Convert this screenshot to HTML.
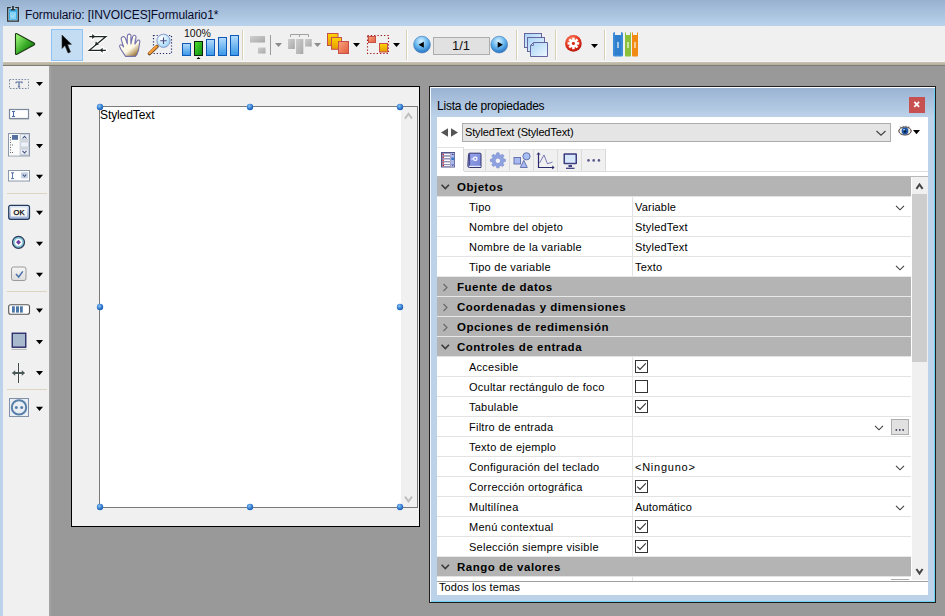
<!DOCTYPE html>
<html><head><meta charset="utf-8">
<style>
*{box-sizing:border-box;margin:0;padding:0}
html,body{width:945px;height:616px;overflow:hidden;background:#999999;font-family:"Liberation Sans",sans-serif;color:#000}
.a{position:absolute}
#title{left:0;top:0;width:945px;height:26px;background:linear-gradient(#97b1d0,#b9d3ec)}
#lframe{left:0;top:26px;width:3px;height:590px;background:#bcd2ea}
#tb{left:3px;top:26px;width:942px;height:36px;background:#f0f0f0}
#band{left:3px;top:61px;width:942px;height:5px;background:linear-gradient(#f7f7f7 0,#f7f7f7 1px,#c7c3af 1px,#b4b09e 4px,#7f7e74 4px,#7f7e74 5px)}
#pal{left:3px;top:66px;width:46px;height:550px;background:#f0f0f0}
#palr{left:49px;top:66px;width:2px;height:550px;background:#a2a2a2}
.sep{position:absolute;width:2px;height:30px;top:30px;background:linear-gradient(90deg,#dcd6c4,#fbfaf6)}
.hsep{position:absolute;left:7px;width:40px;height:1px;background:#ddd7c6}
.arr{position:absolute;width:0;height:0;border-left:4px solid transparent;border-right:4px solid transparent;border-top:4px solid #000}
.t11{font-size:11px;white-space:nowrap;position:absolute;line-height:13px}
#form{left:71px;top:86px;width:349px;height:441px;background:#f0f0f0;border:1px solid #000}
#ta{left:99px;top:106px;width:319px;height:402px;background:#fff;border:1px solid #7a7a7a}
.hd{position:absolute;width:6px;height:6px;border-radius:50%;background:radial-gradient(circle at 40% 35%,#7fb4ec,#2f78cc 60%,#1d5fb0)}
#panel{left:429px;top:86px;width:507px;height:517px;background:#bcd2e9;border:1px solid #1e1e1e}
#ptitle{left:430px;top:87px;width:505px;height:30px;background:linear-gradient(#99b2d2,#bcd2e9)}
#pcont{left:437px;top:117px;width:491px;height:478px;background:#fff}

.hdr{position:absolute;left:437px;width:474px;height:20px;background:#b4b4b4}
.hdr span{position:absolute;left:20px;top:5px;font-size:11.5px;line-height:13px;font-weight:bold;letter-spacing:0.5px;white-space:nowrap;color:#000}
.row{position:absolute;left:437px;width:474px;height:20px;background:#fff}
.tl{position:absolute;left:0;top:0;width:474px;height:1px;background:#e3e3e3}
.hdr .tl{background:#e8e8e8}
.row .k{position:absolute;left:32px;top:5px;font-size:11px;line-height:13px;letter-spacing:0.25px;white-space:nowrap;color:#000}
.row .v{position:absolute;left:198px;top:5px;font-size:11px;line-height:13px;letter-spacing:0.2px;white-space:nowrap;color:#000}
.row .d{position:absolute;left:195px;top:0;width:1px;height:20px;background:#e3e3e3}
.cb{position:absolute;left:198px;top:4px}
.ddc{position:absolute;left:458px;top:9px}
.dots{position:absolute;left:454px;top:3px;width:18px;height:16px;background:#e1e1e1;border:1px solid #adadad;font-size:11px;line-height:10px;text-align:center;color:#000;letter-spacing:-0.5px}
.chev{position:absolute;left:0;top:0;width:20px;height:20px}
</style></head><body>
<div id="title" class="a"></div>
<div class="a t11" style="left:25px;top:9px;font-size:12px;letter-spacing:-0.1px;color:#0a0a2a">Formulario: [INVOICES]Formulario1*</div>
<svg class="a" style="left:0;top:0" width="26" height="26" viewBox="0 0 26 26">
<rect x="8.3" y="8.2" width="9.4" height="12.3" fill="#cfe6f7"/><rect x="9" y="9" width="8.2" height="10.8" fill="#37ade8"/>
<rect x="10" y="11.8" width="6" height="7.2" fill="#86d2f6"/>
<path d="M10.8,7.6 H7.7 V21.1 H18.3 V7.6 H15.2" fill="none" stroke="#2d2d2d" stroke-width="1.3"/>
<rect x="12.1" y="6" width="1.8" height="3.5" fill="#333"/>
<rect x="11" y="9" width="4" height="1.4" fill="#333"/>
<path d="M11,15.5 L12.5,17 L15.5,13.8" fill="none" stroke="#e8f6ff" stroke-width="0.9" stroke-dasharray="0.8,0.6"/>
</svg>
<div id="lframe" class="a"></div>
<div id="tb" class="a"></div>
<div id="band" class="a"></div>

<svg class="a" style="left:0;top:0" width="945" height="66" viewBox="0 0 945 66">
<defs>
<linearGradient id="gPlay" x1="0" y1="0.2" x2="0.9" y2="1"><stop offset="0" stop-color="#9af674"/><stop offset="0.5" stop-color="#3aac28"/><stop offset="1" stop-color="#0e660c"/></linearGradient>
<linearGradient id="gBar" x1="0" y1="0" x2="0" y2="1"><stop offset="0" stop-color="#b5dcfd"/><stop offset="1" stop-color="#3797e6"/></linearGradient>
<linearGradient id="gGreen" x1="0" y1="0" x2="1" y2="1"><stop offset="0" stop-color="#4fe02a"/><stop offset="1" stop-color="#0a8a10"/></linearGradient>
<linearGradient id="gGray" x1="0" y1="0" x2="1" y2="1"><stop offset="0" stop-color="#cfcfcf"/><stop offset="0.7" stop-color="#b4b4b4"/><stop offset="1" stop-color="#a4a4a4"/></linearGradient>
<linearGradient id="gYel" x1="0" y1="0" x2="0" y2="1"><stop offset="0" stop-color="#ffd400"/><stop offset="1" stop-color="#e59a00"/></linearGradient>
<linearGradient id="gSal" x1="0" y1="0" x2="1" y2="1"><stop offset="0" stop-color="#f9a27e"/><stop offset="1" stop-color="#e15c3c"/></linearGradient>
<radialGradient id="gNav" cx="0.45" cy="0.3" r="0.75"><stop offset="0" stop-color="#d9f1ff"/><stop offset="0.5" stop-color="#66b6ee"/><stop offset="1" stop-color="#1d64b8"/></radialGradient>
<linearGradient id="gPage" x1="0" y1="0" x2="1" y2="1"><stop offset="0" stop-color="#a9d3f5"/><stop offset="1" stop-color="#eef8ff"/></linearGradient>
<radialGradient id="gRed" cx="0.4" cy="0.3" r="0.8"><stop offset="0" stop-color="#ff8a6a"/><stop offset="0.55" stop-color="#e2321c"/><stop offset="1" stop-color="#a80e0a"/></radialGradient>
<radialGradient id="gLens" cx="0.35" cy="0.3" r="0.8"><stop offset="0" stop-color="#ffffff"/><stop offset="0.6" stop-color="#bfe6fb"/><stop offset="1" stop-color="#8ccdf0"/></radialGradient>
<linearGradient id="gHand" x1="0.3" y1="0.35" x2="0.75" y2="1"><stop offset="0" stop-color="#fffff2"/><stop offset="0.5" stop-color="#fbf6e2"/><stop offset="1" stop-color="#98702a"/></linearGradient>
</defs>
<!-- play -->
<path d="M15.5,34.5 Q15.5,33 17,33.8 L34,43 Q35.3,44 34,45 L17,54.2 Q15.5,55 15.5,53.5 Z" fill="url(#gPlay)" stroke="#1b3a14" stroke-width="1.1"/>
<!-- selected button -->
<rect x="51.5" y="29.5" width="31" height="31" fill="#c4ddf3" stroke="#8cc4f7"/>
<!-- cursor -->
<path d="M62,35 L62,48.5 L65,45.5 L68,53 L70.5,52 L67.5,44.5 L71.5,44.3 Z" fill="#000" stroke="#333" stroke-width="0.6" stroke-linejoin="round"/>
<!-- Z icon -->
<g stroke="#ffffff" stroke-width="3.4" fill="none" stroke-linejoin="round" stroke-linecap="round"><path d="M89.3,36.5 H105.9 L89.3,50.3 H105.9"/><path d="M92.2,34 V39 M102.6,48 V52.8"/></g>
<g stroke="#1e2626" stroke-width="1.25" fill="none"><path d="M89.3,36.5 H105.9 L89.3,50.3 H105.9"/></g>
<path d="M92.2,33.9 L95.2,36.5 L92.2,39 Z" fill="#1e2626"/>
<path d="M102.6,47.8 L99.8,50.3 L102.6,52.8 Z" fill="#1e2626"/>
<path d="M95,45.6 L95.8,41.6 L98.9,44.4 Z" fill="#1e2626"/>
<!-- hand -->
<path d="M125.6,56.4 L121,49.5 L119.6,46.6 Q119.4,45 120.8,44.8 Q122,44.7 123.6,47 L121.3,39.6 Q120.9,37.2 122.8,36.7 Q124.6,36.4 125.4,38.2 L127,43.2 L127.4,35.6 Q127.8,34 129.3,34.1 Q131,34.3 131,35.8 L131,43 L132.7,36.6 Q133.2,35 134.6,35.3 Q136.2,35.7 136,37.3 L135.2,43.6 L137,41 Q137.7,39.8 138.9,40.1 Q140.1,40.6 139.8,42 L138.4,50.5 L136.8,54.7 L135.3,56.4 Z" fill="url(#gHand)" stroke="#7472aa" stroke-width="1.1" stroke-linejoin="round"/>
<path d="M126.6,39 L127.6,44.5 M131,37.5 L131,44.5 M135.4,38.5 L134.9,44.5" stroke="#7a78b8" stroke-width="0.9" fill="none"/>
<!-- zoom -->
<rect x="153.5" y="35.5" width="18" height="18" fill="none" stroke="#1e2a6a" stroke-width="1.2" stroke-dasharray="1.2,1.9"/>
<path d="M149.5,53.5 L157,46.5" stroke="#6a4a20" stroke-width="3.6" stroke-linecap="round"/>
<path d="M149.5,53 L156.5,46.5" stroke="#f39a3a" stroke-width="2.4" stroke-linecap="round"/>
<circle cx="163.5" cy="40.8" r="6.6" fill="url(#gLens)" stroke="#8a9ad0" stroke-width="1"/>
<path d="M163.5,37.5 V44 M160.3,40.8 H166.7" stroke="#4a4a80" stroke-width="1.1"/>
<!-- 100% -->
<text x="184" y="36.8" font-family="Liberation Sans" font-size="10.5" fill="#111">100%</text>
<rect x="182.5" y="43.5" width="8" height="12" fill="url(#gBar)" stroke="#1058b8"/>
<rect x="194.5" y="41.5" width="8" height="14" fill="url(#gGreen)" stroke="#0e200e"/>
<rect x="206.5" y="39.5" width="8" height="16" fill="url(#gBar)" stroke="#1058b8"/>
<rect x="218.5" y="37.5" width="8" height="18" fill="url(#gBar)" stroke="#1058b8"/>
<rect x="230.5" y="35.5" width="8" height="20" fill="url(#gBar)" stroke="#1058b8"/>
<path d="M196.5,59 L198.5,57 L200.5,59 Z" fill="#000"/>
<!-- separators -->
<g stroke="#d8cfb7" stroke-width="1"><path d="M242.5,30 V60 M406.5,30 V60 M516.5,30 V60 M555.5,30 V60 M604.5,30 V60"/></g>
<g stroke="#ffffff" stroke-width="1"><path d="M243.5,30 V60 M407.5,30 V60 M517.5,30 V60 M556.5,30 V60 M605.5,30 V60"/></g>
<!-- align (disabled) -->
<rect x="250" y="36" width="15" height="6.5" fill="url(#gGray)"/>
<rect x="258" y="47.5" width="7.5" height="6" fill="url(#gGray)"/>
<path d="M270.5,35 V55" stroke="#9c9c9c" stroke-width="1"/>
<path d="M275,43 L282,43 L278.5,47 Z" fill="#8c8c8c"/>
<!-- distribute (disabled) -->
<path d="M290.5,37 V34.5 H308.5 V37 M299.5,34.5 V37" stroke="#a0a0a0" stroke-width="1" fill="none"/>
<rect x="288" y="39" width="6.8" height="10" fill="url(#gGray)"/>
<rect x="296" y="39" width="7.3" height="15" fill="url(#gGray)"/>
<rect x="305" y="39" width="6.7" height="7.5" fill="url(#gGray)"/>
<path d="M314,43 L321,43 L317.5,47 Z" fill="#8c8c8c"/>
<!-- layers -->
<rect x="327.5" y="33.5" width="10.5" height="12" fill="url(#gYel)" stroke="#c8504a"/>
<rect x="331.5" y="37.5" width="10" height="11.8" fill="url(#gYel)" stroke="#c8504a"/>
<rect x="338.5" y="41.5" width="10" height="12" fill="url(#gSal)" stroke="#c8504a"/>
<path d="M353,43 L360,43 L356.5,47 Z" fill="#000"/>
<!-- selection -->
<rect x="367.5" y="35.5" width="21" height="18" fill="none" stroke="#a01818" stroke-width="1.1" stroke-dasharray="1.3,2"/>
<rect x="368.5" y="36.5" width="7" height="6" fill="url(#gSal)" stroke="#c8504a"/>
<rect x="379.5" y="43.5" width="8" height="8.5" fill="url(#gYel)" stroke="#c8504a"/>
<path d="M393,43 L400,43 L396.5,47 Z" fill="#000"/>
<!-- nav -->
<circle cx="422" cy="44.6" r="8.4" fill="url(#gNav)" stroke="#3a78b8" stroke-width="0.6"/>
<path d="M418.6,44.7 L423.8,41.7 L423.8,47.7 Z" fill="#000"/>
<rect x="433.5" y="37.5" width="56" height="17" fill="#e1e1e1" stroke="#adadad"/>
<text x="452" y="50.4" font-family="Liberation Sans" font-size="13" fill="#111">1/1</text>
<circle cx="499.2" cy="44.6" r="8.4" fill="url(#gNav)" stroke="#3a78b8" stroke-width="0.6"/>
<path d="M502.9,44.7 L497.7,41.7 L497.7,47.7 Z" fill="#000"/>
<!-- pages -->
<rect x="524.5" y="33.5" width="17" height="14" fill="url(#gPage)" stroke="#6464a0"/>
<rect x="527.5" y="37.5" width="17" height="14" fill="url(#gPage)" stroke="#6464a0"/>
<path d="M533.5,42.5 H547.5 V56.5 H530.5 V45.5 Z" fill="url(#gPage)" stroke="#6464a0"/>
<path d="M530.5,45.5 H533.5 V42.5" fill="none" stroke="#6464a0" stroke-width="0.8"/>
<!-- gear -->
<circle cx="573.4" cy="43.4" r="8.3" fill="url(#gRed)"/>
<g fill="#fff">
<circle cx="573.4" cy="43.4" r="4"/>
<rect x="572.2" y="37.6" width="2.4" height="11.6"/>
<rect x="567.6" y="42.2" width="11.6" height="2.4"/>
<rect x="572.2" y="37.6" width="2.4" height="11.6" transform="rotate(45 573.4 43.4)"/>
<rect x="572.2" y="37.6" width="2.4" height="11.6" transform="rotate(-45 573.4 43.4)"/>
</g>
<circle cx="573.4" cy="43.4" r="1.6" fill="#d8321c"/>
<path d="M591,44 L598,44 L594.5,48 Z" fill="#000"/>
<!-- books -->
<path d="M613,34 Q613,32 615,32 L615,35 L621,35 L621,32 Q623,32 623,34 L623,55 Q623,56.5 621.5,56.5 L614.5,56.5 Q613,56.5 613,55 Z" fill="#3a8ad8"/>
<rect x="615" y="35" width="6" height="20" fill="#2a76c8" opacity="0.6"/>
<path d="M625,34 Q625,32 626,32 L626,35 L630,35 L630,32 Q631,32 631,34 L631,55 Q631,56.5 630,56.5 L626,56.5 Q625,56.5 625,55 Z" fill="#8cc038"/>
<path d="M632,34 Q632,32 633,32 L633,35 L637,35 L637,32 Q638,32 638,34 L638,55 Q638,56.5 637,56.5 L633,56.5 Q632,56.5 632,55 Z" fill="#f38a12"/>
<g fill="#ffffff" opacity="0.55"><rect x="617" y="42" width="2" height="6"/><rect x="627" y="42" width="2" height="6"/><rect x="634" y="42" width="2" height="6"/></g>
</svg>

<div id="pal" class="a"></div>
<div id="palr" class="a"></div>
<svg class="a" style="left:0;top:66px" width="51" height="550" viewBox="0 66 51 550">
<defs>
<linearGradient id="gBtn" x1="0" y1="0" x2="0" y2="1"><stop offset="0" stop-color="#dde8f6"/><stop offset="1" stop-color="#9fb2d8"/></linearGradient>
<linearGradient id="gChk" x1="0" y1="0" x2="0" y2="1"><stop offset="0" stop-color="#f6f6f6"/><stop offset="1" stop-color="#dcdcdc"/></linearGradient>
</defs>
<g fill="#000">
<path d="M36,82 H43 L39.5,86 Z"/>
<path d="M36,112.5 H43 L39.5,116.8 Z"/>
<path d="M36,144 H43 L39.5,148.2 Z"/>
<path d="M36,174.8 H43 L39.5,179 Z"/>
<path d="M36,210.8 H43 L39.5,215 Z"/>
<path d="M36,241.8 H43 L39.5,246 Z"/>
<path d="M36,272.8 H43 L39.5,277 Z"/>
<path d="M36,308.6 H43 L39.5,312.8 Z"/>
<path d="M36,340 H43 L39.5,344.2 Z"/>
<path d="M36,371 H43 L39.5,375.2 Z"/>
<path d="M36,406.7 H43 L39.5,410.9 Z"/>
</g>
<g stroke="#ddd5c0" stroke-width="1"><path d="M7,193.5 H47 M7,291.5 H47 M7,389.5 H47"/></g>
<!-- T -->
<rect x="9.5" y="79.5" width="19" height="9" fill="none" stroke="#7d8ca4" stroke-width="1" stroke-dasharray="1.6,1.4"/>
<path d="M16,82 H22 V83.2 M16,82 V83.2 M19,82 V87 M17.8,87 H20.2" fill="none" stroke="#5a6e9a" stroke-width="1.2"/>
<!-- text input -->
<rect x="9.5" y="109.5" width="19" height="9" fill="#fff" stroke="#7a8a9c" stroke-width="1.2"/>
<path d="M10,119.5 H29" stroke="#c8c8c8" stroke-width="1"/>
<path d="M12,111.5 H15 M13.5,111.5 V116.5 M12,116.5 H15" stroke="#4a68a8" stroke-width="1"/>
<!-- list -->
<rect x="8.5" y="133.5" width="21" height="22.5" fill="#d8dade" stroke="#8a98aa" stroke-width="1"/>
<rect x="9" y="134" width="10.5" height="21.5" fill="#fbfbfb"/>
<rect x="12" y="135" width="6" height="4.8" fill="#5470a0"/>
<g fill="#404050"><rect x="10" y="137" width="0.9" height="0.9"/><rect x="10" y="139.5" width="0.9" height="0.9"/><rect x="10" y="142" width="0.9" height="0.9"/><rect x="10" y="144.5" width="0.9" height="0.9"/><rect x="10" y="147" width="0.9" height="0.9"/><rect x="10" y="149.5" width="0.9" height="0.9"/><rect x="10" y="152" width="0.9" height="0.9"/><rect x="12" y="144.5" width="0.9" height="0.9"/><rect x="12" y="152" width="0.9" height="0.9"/></g>
<rect x="20.5" y="134.5" width="8" height="5" rx="1" fill="#eef2f8" stroke="#b8c4d4" stroke-width="0.6"/>
<rect x="20.5" y="142" width="8" height="5" rx="1" fill="#eef2f8" stroke="#b8c4d4" stroke-width="0.6"/>
<rect x="20.5" y="149.2" width="8" height="5" rx="1" fill="#eef2f8" stroke="#b8c4d4" stroke-width="0.6"/>
<path d="M22.5,138.5 L24.5,136.3 L26.5,138.5 M22.5,150.8 L24.5,153 L26.5,150.8" fill="none" stroke="#405078" stroke-width="1.1"/>
<!-- combo -->
<rect x="8.5" y="170.5" width="21" height="10.5" fill="#fff" stroke="#8a98aa" stroke-width="1"/>
<path d="M11,172.8 H14 M12.5,172.8 V178.6 M11,178.6 H14" stroke="#4a68a8" stroke-width="0.9"/>
<rect x="21" y="172.3" width="7" height="6.3" rx="1" fill="#c8d2e6"/>
<path d="M22.8,174.5 L24.5,176.5 L26.2,174.5" fill="none" stroke="#405078" stroke-width="1.1"/>
<!-- OK -->
<rect x="8.7" y="205.3" width="20.8" height="14" rx="2" fill="url(#gBtn)" stroke="#243a5c" stroke-width="1.2"/>
<rect x="11" y="207.5" width="16" height="9" fill="#f4f4f4"/>
<text x="13.6" y="215.2" font-family="Liberation Sans" font-size="7.6" fill="#000" stroke="#000" stroke-width="0.25">OK</text>
<!-- radio -->
<circle cx="18.5" cy="242.3" r="6" fill="#86c6dc" stroke="#2c3a58" stroke-width="1.2"/>
<circle cx="18.5" cy="242.3" r="3.6" fill="#ffffff"/>
<path d="M18.5,239.8 L21,242.3 L18.5,244.8 L16,242.3 Z" fill="#7040a0"/>
<!-- checkbox -->
<rect x="11.5" y="267" width="14.5" height="13.5" rx="2" fill="url(#gChk)" stroke="#9a9a9a" stroke-width="1"/>
<path d="M16,274 L18.7,277 L22.8,271.4" fill="none" stroke="#4a72a8" stroke-width="1.5"/>
<!-- progress -->
<rect x="8.7" y="304.7" width="20.8" height="9.5" rx="2" fill="#fff" stroke="#555" stroke-width="1.1"/>
<g fill="#4a78a8"><rect x="12" y="306.3" width="2.8" height="6.3"/><rect x="16" y="306.3" width="3" height="6.3"/><rect x="20" y="306.3" width="2.8" height="6.3"/></g>
<!-- rect -->
<rect x="11" y="332" width="16" height="16.5" fill="#ffffff"/>
<rect x="12.2" y="333.2" width="13.6" height="14" fill="#a9b9cd" stroke="#1e1e60" stroke-width="1.3"/>
<path d="M11.5,349.3 H26.5" stroke="#b0b0b0" stroke-width="1"/>
<!-- splitter -->
<g stroke="#fff" stroke-width="2.8" fill="none"><path d="M18.5,363 V383 M12.5,373 H25.5"/></g>
<g stroke="#404848" stroke-width="1.1" fill="none"><path d="M18.5,363 V383"/></g>
<path d="M11.8,373 L15.2,370.2 L15.2,372 H21.8 V370.2 L25.2,373 L21.8,375.8 L21.8,374 H15.2 V375.8 Z" fill="#4a5858"/>
<!-- plugin -->
<rect x="9.5" y="398.5" width="19" height="18" fill="#e8eef4" stroke="#8090a6" stroke-width="1"/>
<circle cx="19" cy="407.4" r="7.2" fill="none" stroke="#5a80a8" stroke-width="2"/>
<circle cx="16.3" cy="407.4" r="1.5" fill="#5a80a8"/>
<circle cx="21.7" cy="407.4" r="1.5" fill="#5a80a8"/>
</svg>


<!-- form -->
<div id="form" class="a"></div>
<div id="ta" class="a"></div>
<div class="a" style="left:401px;top:107px;width:16px;height:400px;background:#f0f0f0"></div>
<div class="a t11" style="left:100px;top:109px;font-size:12px;letter-spacing:-0.1px">StyledText</div>

<svg class="a" style="left:96px;top:103px" width="320" height="408" viewBox="96 103 320 408">
<defs><radialGradient id="gH" cx="0.4" cy="0.35" r="0.7"><stop offset="0" stop-color="#8cc4f4"/><stop offset="0.6" stop-color="#2f7ad0"/><stop offset="1" stop-color="#1a58a8"/></radialGradient></defs>
<path d="M405,118.6 L408.5,113.8 L412,118.6" fill="none" stroke="#bdbdbd" stroke-width="1.8"/>
<path d="M405,496.6 L408.5,501.4 L412,496.6" fill="none" stroke="#bdbdbd" stroke-width="1.8"/>
<g fill="url(#gH)">
<circle cx="100" cy="107" r="3.2"/><circle cx="250" cy="107" r="3.2"/><circle cx="400" cy="107" r="3.2"/>
<circle cx="100" cy="307" r="3.2"/><circle cx="400" cy="307" r="3.2"/>
<circle cx="100" cy="507" r="3.2"/><circle cx="250" cy="507" r="3.2"/><circle cx="400" cy="507" r="3.2"/>
</g>
</svg>
<!-- panel -->
<div id="panel" class="a"></div>
<div id="ptitle" class="a"></div>
<div class="a" style="left:430px;top:87px;width:505px;height:1px;background:#fff"></div>
<div class="a" style="left:430px;top:87px;width:1px;height:515px;background:#f4f8fc"></div>
<div class="a" style="left:934px;top:88px;width:1px;height:514px;background:#6cd0f4"></div>
<div class="a" style="left:431px;top:601px;width:504px;height:1px;background:#6cd0f4"></div>
<div id="pcont" class="a"></div>
<div class="a t11" style="left:437px;top:100px;font-size:12px;letter-spacing:-0.2px">Lista de propiedades</div>

<!-- panel top -->
<div class="a" style="left:909px;top:97px;width:16px;height:16px;background:#c75050"></div>
<svg class="a" style="left:909px;top:97px" width="16" height="16" viewBox="0 0 16 16"><path d="M5.3,4.9 L10.1,9.9 M10.1,4.9 L5.3,9.9" stroke="#fff" stroke-width="1.7"/></svg>
<svg class="a" style="left:437px;top:117px" width="491" height="60" viewBox="437 117 491 60">
<path d="M448,128.3 L441,132.5 L448,136.7 Z" fill="#555"/>
<path d="M451,128.3 L458,132.5 L451,136.7 Z" fill="#555"/>
<rect x="462.5" y="123.5" width="428" height="18" fill="#e5e5e5" stroke="#acacac"/>
<path d="M876.5,131 L881,135.2 L885.5,131" fill="none" stroke="#404040" stroke-width="1.1"/>
<!-- eye -->
<ellipse cx="905" cy="131" rx="6.2" ry="4" fill="#f4efe6" stroke="#3a3028" stroke-width="1"/>
<circle cx="905" cy="131" r="3.4" fill="#1f58a8"/>
<circle cx="905" cy="131.5" r="1.3" fill="#0a1a3a"/>
<circle cx="904" cy="129.8" r="0.8" fill="#cfe4ff"/>
<path d="M900,126.5 L901,128 M903,125.8 L903.5,127.5 M906,125.8 L906,127.5 M909,126.3 L908.5,128" stroke="#555" stroke-width="0.7"/>
<path d="M913,130 L920,130 L916.5,134.3 Z" fill="#000"/>
<!-- tab strip -->
<path d="M464,171.5 H928" stroke="#dcdcdc" stroke-width="1"/>
<rect x="464" y="149" width="141.5" height="22" fill="#f0f0f0"/>
<path d="M463.5,147 V171 M485.5,149 V171 M509.5,149 V171 M533.5,149 V171 M557.5,149 V171 M581.5,149 V171 M605.5,149 V171" stroke="#dadada" stroke-width="1"/>
<path d="M437,147.5 H463.5 M464,149.5 H605.5" stroke="#e4e4e4" stroke-width="1"/>
<!-- tab1 list icon -->
<rect x="441.5" y="152.5" width="13" height="14.5" fill="#e8e8f4" stroke="#55558a" stroke-width="1"/>
<g fill="#ffffff" stroke="#6a6aa0" stroke-width="0.6"><rect x="442.3" y="153.3" width="8.2" height="2.3"/><rect x="442.3" y="156.2" width="8.2" height="2.3"/><rect x="442.3" y="159.1" width="8.2" height="2.3"/><rect x="442.3" y="162" width="8.2" height="2.3"/><rect x="442.3" y="164.8" width="8.2" height="1.8"/></g>
<rect x="451" y="153" width="3.3" height="13.5" fill="#aab8ea"/>
<rect x="451.3" y="157.5" width="2.8" height="2.5" fill="#3a78c8"/>
<path d="M451.5,155 L452.7,153.6 L453.9,155 Z M451.5,164.6 L452.7,166 L453.9,164.6 Z" fill="#40408a"/>
<g fill="#d01818"><circle cx="443.3" cy="154.4" r="0.75"/><circle cx="443.3" cy="157.3" r="0.75"/><circle cx="443.3" cy="160.2" r="0.75"/><circle cx="443.3" cy="163.1" r="0.75"/><circle cx="443.3" cy="165.6" r="0.75"/></g>
<!-- tab2 book -->
<defs><linearGradient id="gBook" x1="0" y1="0" x2="1" y2="1"><stop offset="0" stop-color="#9aa8ee"/><stop offset="1" stop-color="#7484d4"/></linearGradient></defs>
<path d="M468.5,154.5 Q468.5,153.2 469.8,153.2 L480,153.2 Q481,153.2 481,154.2 L481,167.5 L469.5,167.5 Q467.8,167.5 467.8,165.8 Z" fill="url(#gBook)" stroke="#363670" stroke-width="1"/>
<path d="M469.5,153.5 V166" stroke="#4a4a90" stroke-width="1.2"/>
<path d="M469.2,166.3 H480.6" stroke="#ffffff" stroke-width="1"/>
<circle cx="475.3" cy="158.8" r="1.7" fill="none" stroke="#fff" stroke-width="1.2"/>
<path d="M471.3,159 H473.4" stroke="#fff" stroke-width="1"/>
<!-- tab3 gear -->
<g transform="translate(497.9 160.8)">
<g fill="#8ea2e2" stroke="#6c80c4" stroke-width="0.7">
<path d="M-1.5,-7.6 H1.5 L1.9,-5.3 L3.9,-4.5 L5.8,-5.9 L7.9,-3.8 L6.5,-1.9 L7.3,0.1 L9.6,0.5 V3.5 L7.3,3.9 L6.5,5.9 L7.9,7.8 L5.8,9.9 L3.9,8.5 L1.9,9.3 L1.5,11.6 H-1.5 L-1.9,9.3 L-3.9,8.5 L-5.8,9.9 L-7.9,7.8 L-6.5,5.9 L-7.3,3.9 L-9.6,3.5 V0.5 L-7.3,0.1 L-6.5,-1.9 L-7.9,-3.8 L-5.8,-5.9 L-3.9,-4.5 L-1.9,-5.3 Z" transform="translate(0 -2) scale(0.78)"/>
</g>
<circle r="2.7" fill="#f4f4f8" stroke="#6c80c4" stroke-width="0.6"/>
</g>
<!-- tab4 shapes -->
<rect x="514" y="157.5" width="6.5" height="6.5" fill="#a8b8f0" stroke="#5a6aa8" stroke-width="0.9"/>
<circle cx="526.5" cy="156.3" r="3.6" fill="#a8c0f4" stroke="#5a6aa8" stroke-width="0.9"/>
<path d="M523.8,160.3 L527.3,167.5 L520.3,167.5 Z" fill="#a8b8f0" stroke="#5a6aa8" stroke-width="0.9"/>
<!-- tab5 graph -->
<path d="M538.5,153 V167.5 H554" fill="none" stroke="#2a2a6a" stroke-width="1.2"/>
<path d="M537,154.8 L538.5,152.7 L540,154.8 M552,166 L554.2,167.5 L552,169" fill="none" stroke="#2a2a6a" stroke-width="0.9"/>
<path d="M539.5,163 L544,155 L547.5,163.8 L552.5,162" fill="none" stroke="#6a6ab0" stroke-width="0.9"/>
<!-- tab6 monitor -->
<rect x="563.5" y="153.3" width="13.5" height="11" rx="1" fill="#3c3c80"/>
<rect x="565" y="154.8" width="10.5" height="8" fill="#d6e6fb"/>
<path d="M568.5,165 H572 V167 H568.5 Z" fill="#3c3c80"/>
<path d="M566,168.3 H574.5" stroke="#3c3c80" stroke-width="1.3"/>
<!-- tab7 dots -->
<g fill="#5a5a8a"><circle cx="588.5" cy="160.4" r="1.3"/><circle cx="593.7" cy="160.4" r="1.3"/><circle cx="598.9" cy="160.4" r="1.3"/></g>
</svg>
<div class="a t11" style="left:465px;top:126px;font-size:11px;letter-spacing:-0.15px">StyledText (StyledText)</div>
<!-- grid -->
<div class="hdr" style="top:176px"><i class="tl"></i><svg class="chev" width="20" height="20" viewBox="0 0 20 20"><path d="M4.6,8.8 L8.3,12.5 L12,8.8" fill="none" stroke="#3a3a3a" stroke-width="1.6"/></svg><span>Objetos</span></div>
<div class="row" style="top:196px"><i class="tl"></i><span class="k">Tipo</span><i class="d"></i><span class="v">Variable</span><svg class="ddc" width="10" height="6" viewBox="0 0 10 6"><path d="M1,0.8 L5,4.8 L9,0.8" fill="none" stroke="#404040" stroke-width="1.1"/></svg></div>
<div class="row" style="top:216px"><i class="tl"></i><span class="k">Nombre del objeto</span><i class="d"></i><span class="v">StyledText</span></div>
<div class="row" style="top:236px"><i class="tl"></i><span class="k">Nombre de la variable</span><i class="d"></i><span class="v">StyledText</span></div>
<div class="row" style="top:256px"><i class="tl"></i><span class="k">Tipo de variable</span><i class="d"></i><span class="v">Texto</span><svg class="ddc" width="10" height="6" viewBox="0 0 10 6"><path d="M1,0.8 L5,4.8 L9,0.8" fill="none" stroke="#404040" stroke-width="1.1"/></svg></div>
<div class="hdr" style="top:276px"><i class="tl"></i><svg class="chev" width="20" height="20" viewBox="0 0 20 20"><path d="M6.5,8 L10,11.5 L6.5,15" fill="none" stroke="#6a6a6a" stroke-width="1.2"/></svg><span>Fuente de datos</span></div>
<div class="hdr" style="top:296px"><i class="tl"></i><svg class="chev" width="20" height="20" viewBox="0 0 20 20"><path d="M6.5,8 L10,11.5 L6.5,15" fill="none" stroke="#6a6a6a" stroke-width="1.2"/></svg><span>Coordenadas y dimensiones</span></div>
<div class="hdr" style="top:316px"><i class="tl"></i><svg class="chev" width="20" height="20" viewBox="0 0 20 20"><path d="M6.5,8 L10,11.5 L6.5,15" fill="none" stroke="#6a6a6a" stroke-width="1.2"/></svg><span>Opciones de redimensión</span></div>
<div class="hdr" style="top:336px"><i class="tl"></i><svg class="chev" width="20" height="20" viewBox="0 0 20 20"><path d="M4.6,8.8 L8.3,12.5 L12,8.8" fill="none" stroke="#3a3a3a" stroke-width="1.6"/></svg><span>Controles de entrada</span></div>
<div class="row" style="top:356px"><i class="tl"></i><span class="k">Accesible</span><i class="d"></i><svg class="cb" width="13" height="13" viewBox="0 0 13 13"><rect x="0.5" y="0.5" width="12" height="12" fill="#fff" stroke="#333"/><path d="M2.3,6.6 L5,9.4 L10.8,3.4" fill="none" stroke="#333" stroke-width="1.1"/></svg></div>
<div class="row" style="top:376px"><i class="tl"></i><span class="k">Ocultar rectángulo de foco</span><i class="d"></i><svg class="cb" width="13" height="13" viewBox="0 0 13 13"><rect x="0.5" y="0.5" width="12" height="12" fill="#fff" stroke="#333"/></svg></div>
<div class="row" style="top:396px"><i class="tl"></i><span class="k">Tabulable</span><i class="d"></i><svg class="cb" width="13" height="13" viewBox="0 0 13 13"><rect x="0.5" y="0.5" width="12" height="12" fill="#fff" stroke="#333"/><path d="M2.3,6.6 L5,9.4 L10.8,3.4" fill="none" stroke="#333" stroke-width="1.1"/></svg></div>
<div class="row" style="top:416px"><i class="tl"></i><span class="k">Filtro de entrada</span><i class="d"></i><svg class="ddc" style="left:437px" width="10" height="6" viewBox="0 0 10 6"><path d="M1,0.8 L5,4.8 L9,0.8" fill="none" stroke="#404040" stroke-width="1.1"/></svg><div class="dots"><svg width="16" height="14" viewBox="0 0 16 14" style="position:absolute;left:0;top:0"><g fill="#202040"><rect x="3.6" y="9.2" width="1.5" height="1.5"/><rect x="7" y="9.2" width="1.5" height="1.5"/><rect x="10.4" y="9.2" width="1.5" height="1.5"/></g></svg></div></div>
<div class="row" style="top:436px"><i class="tl"></i><span class="k">Texto de ejemplo</span><i class="d"></i></div>
<div class="row" style="top:456px"><i class="tl"></i><span class="k">Configuración del teclado</span><i class="d"></i><span class="v" style="letter-spacing:0.75px">&lt;Ninguno&gt;</span><svg class="ddc" width="10" height="6" viewBox="0 0 10 6"><path d="M1,0.8 L5,4.8 L9,0.8" fill="none" stroke="#404040" stroke-width="1.1"/></svg></div>
<div class="row" style="top:476px"><i class="tl"></i><span class="k">Corrección ortográfica</span><i class="d"></i><svg class="cb" width="13" height="13" viewBox="0 0 13 13"><rect x="0.5" y="0.5" width="12" height="12" fill="#fff" stroke="#333"/><path d="M2.3,6.6 L5,9.4 L10.8,3.4" fill="none" stroke="#333" stroke-width="1.1"/></svg></div>
<div class="row" style="top:496px"><i class="tl"></i><span class="k">Multilínea</span><i class="d"></i><span class="v">Automático</span><svg class="ddc" width="10" height="6" viewBox="0 0 10 6"><path d="M1,0.8 L5,4.8 L9,0.8" fill="none" stroke="#404040" stroke-width="1.1"/></svg></div>
<div class="row" style="top:516px"><i class="tl"></i><span class="k">Menú contextual</span><i class="d"></i><svg class="cb" width="13" height="13" viewBox="0 0 13 13"><rect x="0.5" y="0.5" width="12" height="12" fill="#fff" stroke="#333"/><path d="M2.3,6.6 L5,9.4 L10.8,3.4" fill="none" stroke="#333" stroke-width="1.1"/></svg></div>
<div class="row" style="top:536px"><i class="tl"></i><span class="k">Selección siempre visible</span><i class="d"></i><svg class="cb" width="13" height="13" viewBox="0 0 13 13"><rect x="0.5" y="0.5" width="12" height="12" fill="#fff" stroke="#333"/><path d="M2.3,6.6 L5,9.4 L10.8,3.4" fill="none" stroke="#333" stroke-width="1.1"/></svg></div>
<div class="hdr" style="top:556px"><i class="tl"></i><svg class="chev" width="20" height="20" viewBox="0 0 20 20"><path d="M4.6,8.8 L8.3,12.5 L12,8.8" fill="none" stroke="#3a3a3a" stroke-width="1.6"/></svg><span>Rango de valores</span></div>
<div class="row" style="top:576px;height:5px"><i class="tl"></i><i class="d" style="height:5px"></i></div>
<!-- scrollbar & footer -->
<div class="a" style="left:437px;top:176px;width:491px;height:1px;background:#b8b8b8"></div>
<div class="a" style="left:912px;top:177px;width:16px;height:403px;background:#f0f0f0"></div>
<div class="a" style="left:912px;top:194px;width:15px;height:168px;background:#cdcdcd"></div>
<svg class="a" style="left:912px;top:176px" width="16" height="404" viewBox="0 0 16 404">
<path d="M4.4,12.8 L7.5,8.4 L10.6,12.8" fill="none" stroke="#454545" stroke-width="2"/>
<path d="M4.4,393 L7.5,397.4 L10.6,393" fill="none" stroke="#454545" stroke-width="2"/>
</svg>
<div class="a" style="left:891px;top:579px;width:18px;height:1px;background:#adadad"></div>
<div class="a" style="left:437px;top:581px;width:491px;height:1px;background:#a0a0a0"></div>
<div class="a t11" style="left:439px;top:581px;font-size:11px;letter-spacing:0.1px">Todos los temas</div>
</body></html>
